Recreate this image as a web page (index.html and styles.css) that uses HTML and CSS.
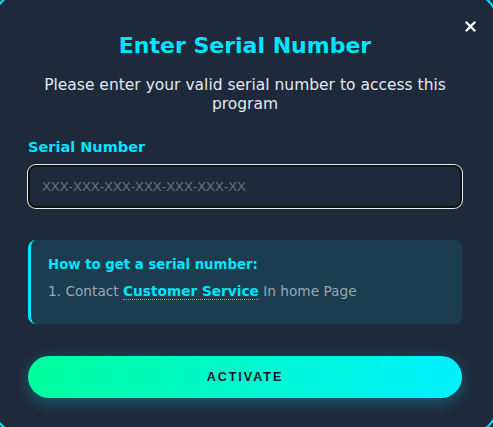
FILE: index.html
```
<!DOCTYPE html>
<html lang="en">
<head>
<meta charset="utf-8">
<title>Enter Serial Number</title>
<link rel="stylesheet" href="styles.css">
</head>
<body>
<div class="modal">
  <button class="close" aria-label="Close">
    <svg width="11" height="11" viewBox="0 0 11 11"><path d="M1.5 1.5 L9.5 9.5 M9.5 1.5 L1.5 9.5" stroke="#fff" stroke-width="2.4" stroke-linecap="round"/></svg>
  </button>
  <h1 class="title">Enter Serial Number</h1>
  <p class="subtitle">Please enter your valid serial number to access this program</p>
  <label class="label" for="serial">Serial Number</label>
  <input class="serial" id="serial" type="text" placeholder="XXX-XXX-XXX-XXX-XXX-XXX-XX" autofocus>
  <div class="info">
    <div class="info-title">How to get a serial number:</div>
    <div class="info-text">1. Contact <span class="link">Customer Service</span> In home Page</div>
  </div>
  <button class="activate">ACTIVATE</button>
</div>
</body>
</html>
```

FILE: styles.css
```
html {
  margin: 0;
  padding: 0;
  background: #1e293b;
  overflow: hidden;
}
body {
  margin: 0;
  padding: 0;
  font-family: "DejaVu Sans", sans-serif;
}
.modal {
  box-sizing: border-box;
  width: calc(100% + 10px);
  height: calc(100vh + 12px);
  margin: -6px -4px -6px -6px;
  border: 2px solid #00e5ff;
  border-radius: 24px;
  padding: 36px 33px 0 32px;
  position: relative;
  display: flex;
  flex-direction: column;
}
.close {
  position: absolute;
  top: 25px;
  right: 19px;
  background: none;
  border: none;
  padding: 0;
  width: 11px;
  height: 11px;
  display: flex;
}
.title {
  margin: 0;
  font-size: 22px;
  line-height: 28px;
  font-weight: 700;
  color: #00e5ff;
  text-align: center;
}
.subtitle {
  margin: 16px 0 0;
  font-size: 15.5px;
  line-height: 19px;
  color: #e2e8f0;
  text-align: center;
}
.label {
  margin-top: 23px;
  font-size: 14.5px;
  line-height: 20px;
  font-weight: 700;
  color: #00e5ff;
}
.serial {
  box-sizing: border-box;
  margin-top: 8px;
  height: 43px;
  width: 100%;
  background: #1e293b;
  border: 2px solid #111;
  border-radius: 8px;
  box-shadow: 0 0 0 1px #e8e8e8;
  outline: none;
  padding: 0 12px;
  font-family: "Liberation Sans", sans-serif;
  font-size: 13.3px;
  color: #e2e8f0;
  caret-color: #e2e8f0;
}
.serial::placeholder {
  color: #6e737c;
}
.info {
  margin-top: 32px;
  background: #1b3d4f;
  border-left: 3px solid #00e5ff;
  border-radius: 8px;
  padding: 16px 20px 23px 17px;
}
.info-title {
  font-size: 13.3px;
  line-height: 18px;
  font-weight: 700;
  color: #00e5ff;
}
.info-text {
  margin-top: 7px;
  font-size: 13.7px;
  line-height: 20px;
  color: #9aa6b8;
}
.link {
  font-weight: 700;
  color: #00e5ff;
  border-bottom: 1px dotted #00e5ff;
}
.activate {
  margin-top: 32px;
  height: 42px;
  width: 100%;
  border: none;
  border-radius: 21px;
  background: linear-gradient(100deg, #00ff9d 0%, #00f0ff 100%);
  box-shadow: 0 4px 15px rgba(0, 229, 255, 0.3);
  font-family: "Liberation Sans", sans-serif;
  font-size: 12.5px;
  font-weight: 700;
  letter-spacing: 2px;
  color: #0f172a;
}
```
